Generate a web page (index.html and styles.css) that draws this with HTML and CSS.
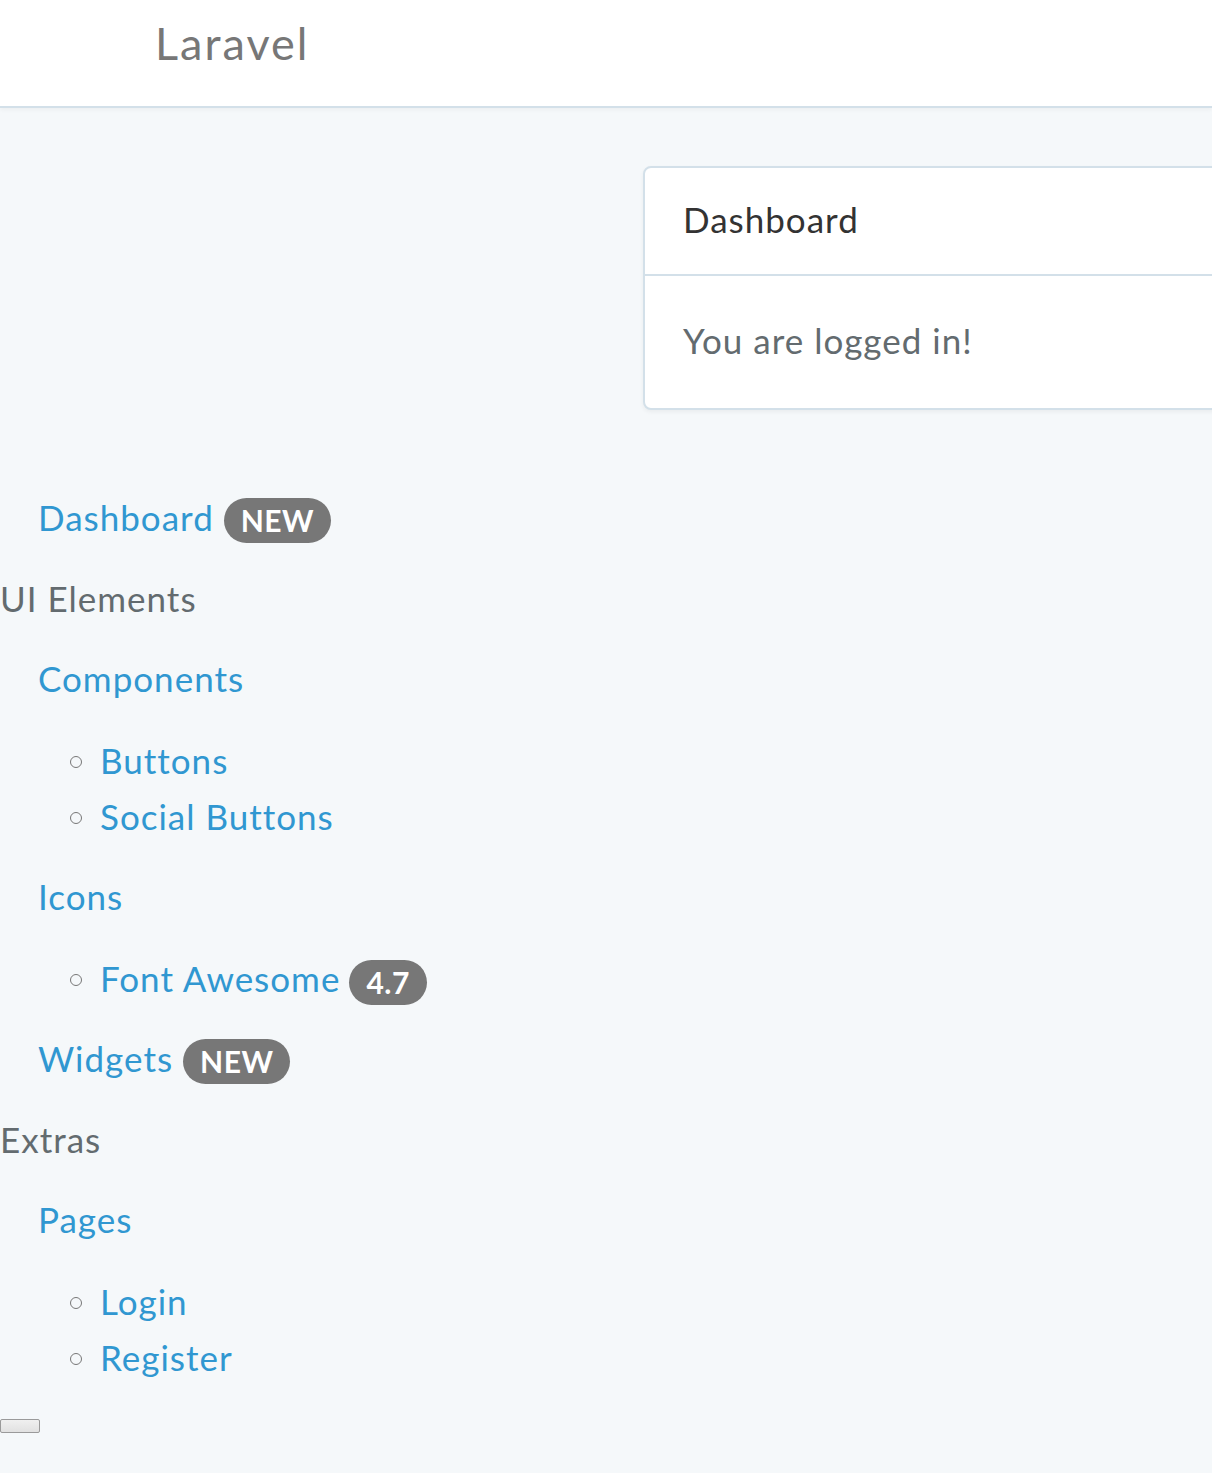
FILE: index.html
```html
<!DOCTYPE html>
<html lang="en">
<head>
<meta charset="utf-8">
<title>Laravel</title>
<link rel="stylesheet" href="styles.css">
</head>
<body>
<div class="app">
  <nav class="navbar">
    <a class="brand" href="#">Laravel</a>
  </nav>

  <main class="content">
    <div class="card">
      <div class="card-heading">Dashboard</div>
      <div class="card-body">You are logged in!</div>
    </div>
  </main>

  <aside class="sidebar">
    <ul class="menu">
      <li class="item"><a href="#">Dashboard</a> <span class="badge">NEW</span></li>
      <li class="header">UI Elements</li>
      <li class="item"><a href="#">Components</a>
        <ul class="sub">
          <li><a href="#">Buttons</a></li>
          <li><a href="#">Social Buttons</a></li>
        </ul>
      </li>
      <li class="item"><a href="#">Icons</a>
        <ul class="sub">
          <li><a href="#">Font Awesome</a> <span class="badge">4.7</span></li>
        </ul>
      </li>
      <li class="item"><a href="#">Widgets</a> <span class="badge">NEW</span></li>
      <li class="header">Extras</li>
      <li class="item"><a href="#">Pages</a>
        <ul class="sub">
          <li><a href="#">Login</a></li>
          <li><a href="#">Register</a></li>
        </ul>
      </li>
    </ul>
    <button class="toggle" type="button"></button>
  </aside>
</div>
</body>
</html>
```

FILE: styles.css
```css
html, body {
  margin: 0;
  padding: 0;
}
body {
  background: #f5f8fa;
  font-family: "Lato", "Liberation Sans", sans-serif;
  font-size: 35px;
  line-height: 56px;
  letter-spacing: 1px;
  color: #636b6f;
  overflow-x: hidden;
}
a {
  color: #3097d1;
  text-decoration: none;
}
.navbar {
  height: 106px;
  background: #fff;
  border-bottom: 2px solid #d3e0e9;
  box-shadow: 0 2px 4px rgba(0,0,0,0.04);
  display: flex;
  align-items: center;
  padding-left: 155px;
}
.brand {
  color: #777;
  font-size: 45px;
  line-height: 56px;
  letter-spacing: 2px;
  margin-top: -20px;
}
.content {
  padding: 58px 0 0 643px;
}
.card {
  margin-right: -20px;
  background: #fff;
  border: 2px solid #d3e0e9;
  border-radius: 8px;
  box-shadow: 0 2px 4px rgba(0,0,0,0.05);
}
.card-heading {
  color: #333;
  padding: 23px 38px 27px;
  border-bottom: 2px solid #d3e0e9;
}
.card-body {
  padding: 36px 38px 40px;
}
.sidebar {
  padding-top: 79px;
}
.menu {
  list-style: none;
  margin: 0;
  padding: 0;
}
.menu > li + li {
  margin-top: 24.5px;
}
.item {
  padding-left: 38px;
}
.header {
  padding-left: 0;
  color: #636b6f;
}
.sub {
  list-style: none;
  margin: 25.5px 0 0 -38px;
  padding: 0;
}
.sub li {
  display: flex;
  align-items: center;
  padding-left: 70px;
}
.sub li::before {
  content: "";
  width: 10px;
  height: 10px;
  border: 1.5px solid #777;
  border-radius: 50%;
  margin-right: 18px;
  margin-top: 4px;
  flex: none;
}
.sub li .badge {
  margin-left: 9px;
  top: 5px;
}
.badge {
  display: inline-block;
  background: #777;
  color: #fff;
  font-weight: 700;
  font-size: 30px;
  letter-spacing: 0.5px;
  line-height: 1;
  padding: 7px 17px 8px;
  border-radius: 25px;
  vertical-align: middle;
  position: relative;
  top: -2px;
}
.toggle {
  display: block;
  margin-top: 34px;
  width: 40px;
  height: 14px;
  padding: 0;
  border: 1px solid #9a9a9a;
  border-radius: 2px;
  background: linear-gradient(#f0f0f0, #e1e1e1);
}
```
